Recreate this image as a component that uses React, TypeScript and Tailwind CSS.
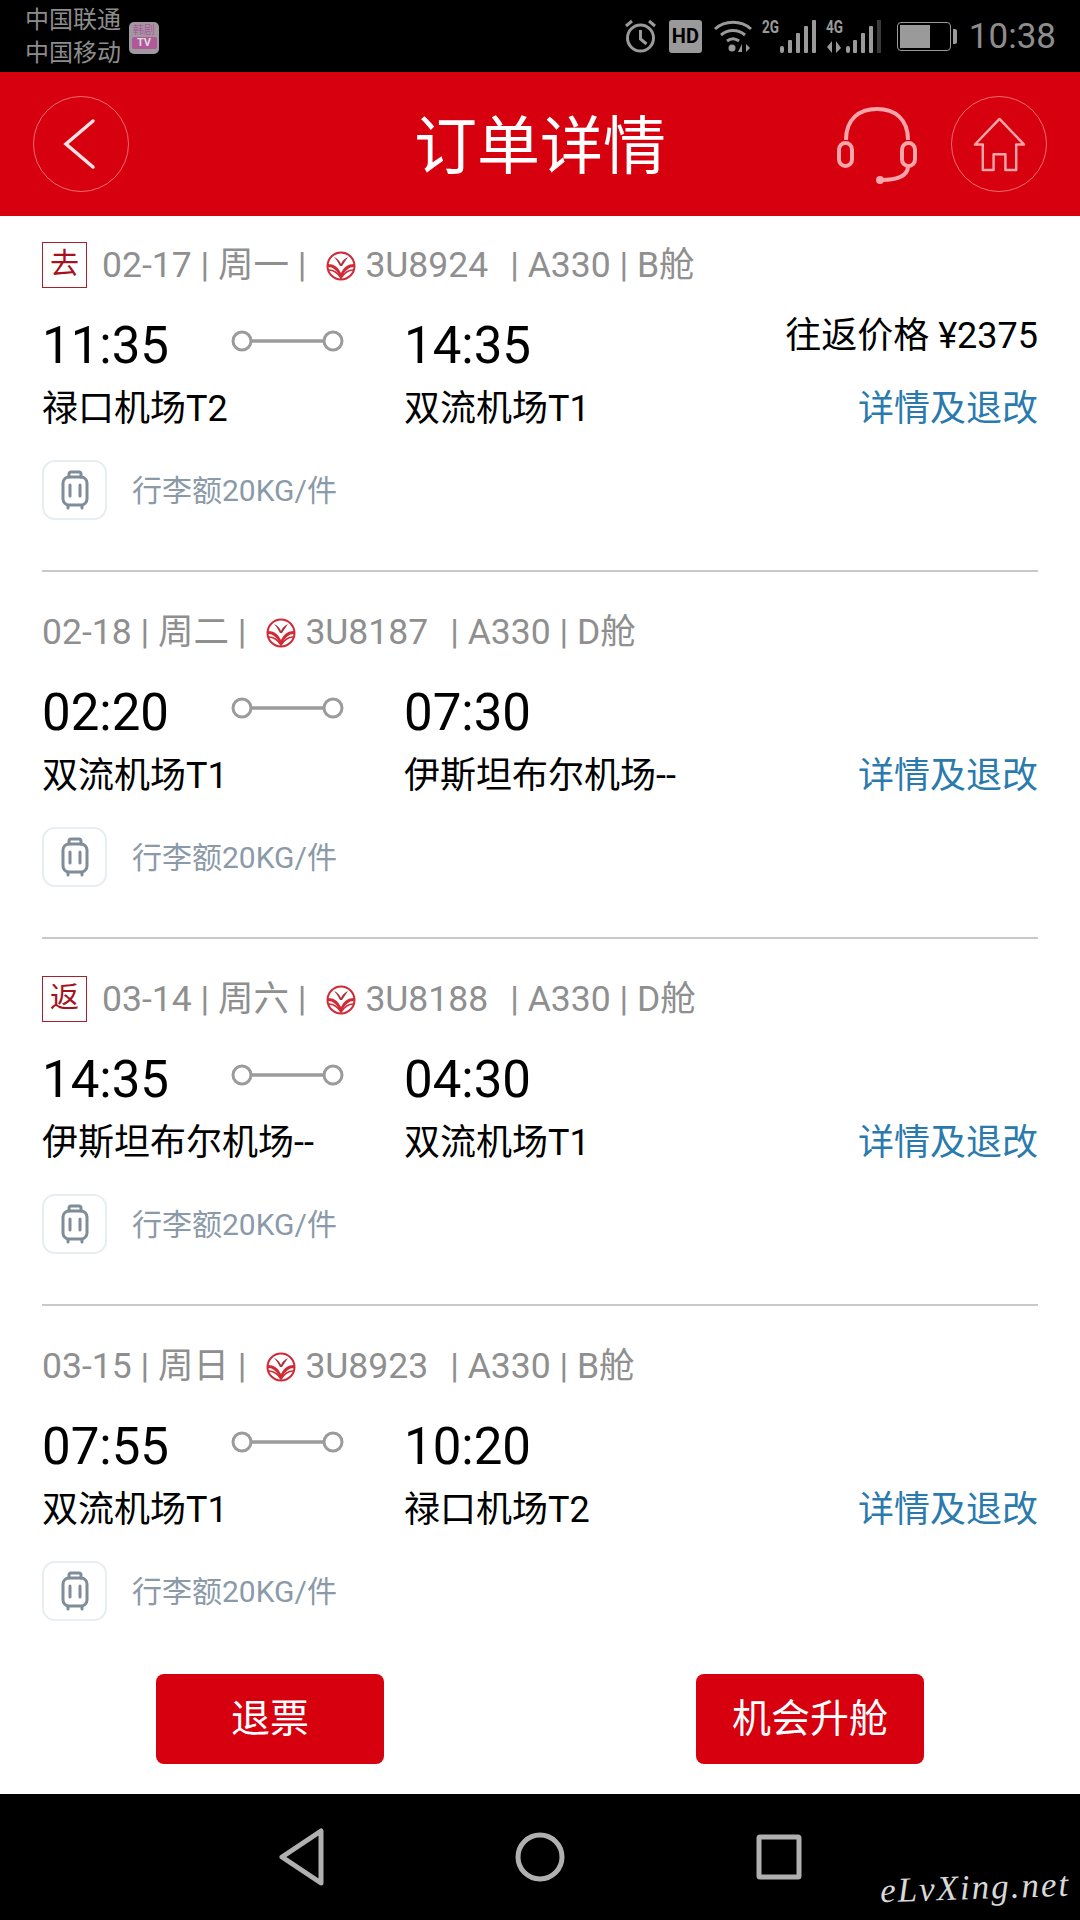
import React from 'react';

const CJK = 'font-["Roboto","Noto_Sans_CJK_SC",sans-serif]';

const segments = [
  {
    tag: '去',
    date: '02-17 | 周一 |',
    flight: '3U8924',
    cabin: '| A330 | B舱',
    from: '11:35',
    to: '14:35',
    fromPort: '禄口机场T2',
    toPort: '双流机场T1',
    price: '往返价格 ¥2375',
  },
  {
    date: '02-18 | 周二 |',
    flight: '3U8187',
    cabin: '| A330 | D舱',
    from: '02:20',
    to: '07:30',
    fromPort: '双流机场T1',
    toPort: '伊斯坦布尔机场--',
  },
  {
    tag: '返',
    date: '03-14 | 周六 |',
    flight: '3U8188',
    cabin: '| A330 | D舱',
    from: '14:35',
    to: '04:30',
    fromPort: '伊斯坦布尔机场--',
    toPort: '双流机场T1',
  },
  {
    date: '03-15 | 周日 |',
    flight: '3U8923',
    cabin: '| A330 | B舱',
    from: '07:55',
    to: '10:20',
    fromPort: '双流机场T1',
    toPort: '禄口机场T2',
  },
];

const AirlineLogo = () => (
  <svg width="30" height="30" viewBox="0 0 30 30" fill="none">
    <circle cx="15" cy="15" r="13.5" fill="#fff" stroke="#d02a36" strokeWidth="2" />
    <path d="M2 13c6 0 10 3 13 9 3-6 7-9 13-9v3c-5 0-9 3-13 12-4-9-8-12-13-12z" fill="#d02a36" />
    <path d="M3 19c5 0 8 2 12 8 4-6 7-8 12-8" stroke="#d02a36" strokeWidth="1.6" />
    <path d="M8 6c3 1 5 3 7 7 1-3 3-5 7-7-2 3-4 6-6 9h-2C12 11 10 8 8 6z" fill="#a8323a" />
  </svg>
);

const Connector = () => (
  <svg className="-ml-[1px]" width="114" height="24" viewBox="0 0 114 24" fill="none" stroke="#9b9b9b">
    <line x1="20" y1="12" x2="94" y2="12" strokeWidth="3.5" />
    <circle cx="11" cy="12" r="9" strokeWidth="3" fill="#fff" />
    <circle cx="102" cy="12" r="9" strokeWidth="3" fill="#fff" />
  </svg>
);

const Bag = () => (
  <div className="flex h-[60px] w-[65px] items-center justify-center rounded-[13px] border-[2px] border-[#e8edf1]">
    <svg width="28" height="40" viewBox="0 0 28 40" fill="none" stroke="#7f8c99" strokeWidth="3" strokeLinecap="round">
      <rect x="2" y="7" width="24" height="28" rx="6" />
      <path d="M8 7V4a2 2 0 0 1 2-2h8a2 2 0 0 1 2 2v3" />
      <path d="M9 15v11M19 15v11M7 36v2M21 36v2" />
    </svg>
  </div>
);

const Segment = ({ s, index }: { s: (typeof segments)[number]; index: number }) => {
  const first = index === 0;
  const last = index === segments.length - 1;
  return (
    <div className={`mx-[42px] flex flex-col ${first ? 'h-[356px]' : 'h-[367px]'} ${last ? '' : 'border-b-2 border-[#c9c9c9]'}`}>
      <div className={`flex h-[46px] items-center text-[35.5px] text-[#8f8f8f] ${first ? 'mt-[27px]' : 'mt-[38px]'}`}>
        {s.tag && (
          <span className="mr-[15px] flex h-[46px] w-[45px] -translate-y-[1px] items-center justify-center border border-[#a8202c] text-[29px] text-[#a8101c]">
            {s.tag}
          </span>
        )}
        <span>{s.date}</span>
        <span className="ml-[20px] mr-[9px] flex">
          <AirlineLogo />
        </span>
        <span>{s.flight}</span>
        <span className="ml-[22px]">{s.cabin}</span>
      </div>
      <div className="mt-[27px] flex">
        <div className="w-[190px]">
          <div className="h-[60px] text-[51px] leading-[60px] text-black">{s.from}</div>
        </div>
        <div className="w-[172px] pt-[13px]">
          <Connector />
        </div>
        <div className="h-[60px] text-[51px] leading-[60px] text-black">{s.to}</div>
        {s.price && <div className="ml-auto text-[36px] leading-[40px] text-black">{s.price}</div>}
      </div>
      <div className="mt-[9px] flex h-[48px] items-center text-[36px] text-black">
        <span className="w-[362px] whitespace-nowrap">{s.fromPort}</span>
        <span className="whitespace-nowrap">{s.toPort}</span>
        <span className="ml-auto text-[#2a7aad]">详情及退改</span>
      </div>
      <div className="mt-[27px] flex items-center">
        <Bag />
        <span className="ml-[25px] text-[30px] text-[#8a9aa8]">行李额20KG/件</span>
      </div>
    </div>
  );
};

const App = () => {
  return (
    <div className={`flex h-[1920px] w-[1080px] flex-col overflow-hidden bg-white ${CJK}`}>
      <div className="flex h-[72px] items-center justify-between bg-black pl-[25px] pr-[24px] text-[#8d8d8d]">
        <div className="flex items-center">
          <div className="pt-[2px] text-[24px] leading-[33px]">
            <div>中国联通</div>
            <div>中国移动</div>
          </div>
          <div className="ml-[8px] mt-[3px] flex h-[32px] w-[30px] flex-col items-center rounded-[5px] bg-[#a09aa0] pt-[2px] text-[11px] leading-[13px] text-[#b0589a]">
            <span>韩剧</span>
            <span className="w-[25px] rounded-[2px] bg-[#b0589a] text-center text-[11px] font-bold leading-[12px] text-[#ddd]">TV</span>
          </div>
        </div>
        <div className="flex items-center">
          <svg width="35" height="36" viewBox="0 0 35 36" fill="none" stroke="#9a9a9a" strokeWidth="3">
            <circle cx="17.5" cy="20" r="13" />
            <path d="M17.5 12v9l6 5M3 8l6-5M32 8l-6-5" />
          </svg>
          <span className="ml-[11px] flex h-[33px] w-[33px] items-center justify-center rounded-[3px] bg-[#9a9a9a] text-[20px] font-bold text-black">HD</span>
          <svg className="ml-[11px]" width="40" height="34" viewBox="0 0 40 34" fill="none" stroke="#9a9a9a" strokeWidth="3">
            <path d="M2 10c10-9 26-9 36 0M8 16c7-6 17-6 24 0M14 22c4-3 8-3 12 0" />
            <circle cx="19" cy="29" r="3.5" fill="#9a9a9a" stroke="none" />
            <path d="M29 33v-8l-4 8zM33 33v-8l4 4z" fill="#9a9a9a" stroke="none" />
          </svg>
          <svg className="ml-[9px] overflow-visible" width="55" height="34" viewBox="0 0 55 34" fill="#9a9a9a">
            <text x="0" y="14" fontSize="18" fontWeight="700" textLength="17" lengthAdjust="spacingAndGlyphs">2G</text>
            <rect x="18" y="27" width="4" height="7" rx="2" />
            <rect x="26" y="21" width="4" height="13" rx="1" />
            <rect x="34" y="14" width="4" height="20" rx="1" />
            <rect x="42" y="7" width="4" height="27" rx="1" />
            <rect x="50" y="1" width="4" height="33" rx="1" />
          </svg>
          <svg className="ml-[9px] overflow-visible" width="55" height="34" viewBox="0 0 55 34" fill="#9a9a9a">
            <text x="0" y="14" fontSize="18" fontWeight="700" textLength="17" lengthAdjust="spacingAndGlyphs">4G</text>
            <path d="M6 34V22l-5 6zM10 34V22l5 7z" />
            <rect x="20" y="27" width="4" height="7" rx="2" />
            <rect x="27" y="21" width="4" height="13" rx="1" />
            <rect x="35" y="14" width="4" height="20" rx="1" />
            <rect x="43" y="7" width="4" height="27" rx="1" />
            <rect x="51" y="1" width="4" height="33" fill="#3a3a3a" />
          </svg>
          <div className="ml-[16px] flex h-[29px] w-[54px] items-center rounded-[4px] border border-[#9a9a9a] p-[2px]">
            <div className="h-full w-[30px] bg-[#9a9a9a]" />
          </div>
          <div className="ml-[2px] h-[15px] w-[4px] rounded-r-[2px] bg-[#9a9a9a]" />
          <span className="ml-[12px] text-[35px] leading-none">10:38</span>
        </div>
      </div>

      <div className="flex h-[144px] items-center bg-[#d6000f] px-[33px]">
        <div className="w-[210px]">
          <div className="flex h-[96px] w-[96px] items-center justify-center rounded-full border border-[#f36b72]">
            <svg className="-ml-[5px]" width="34" height="52" viewBox="0 0 34 52" fill="none" stroke="#fbe3e4" strokeWidth="3.5" strokeLinecap="round">
              <path d="M31 3 4 26l27 23" />
            </svg>
          </div>
        </div>
        <div className="flex-1 pt-[6px] text-center text-[63px] text-white">订单详情</div>
        <div className="flex w-[210px] items-center">
          <svg className="mr-[34px] mt-[3px]" width="80" height="78" viewBox="0 0 80 78" fill="none" stroke="#f9a5a9" strokeWidth="4">
            <path d="M9 33C9 12 22 2 40 2s31 10 31 31" />
            <rect x="2" y="36" width="13" height="23" rx="6.5" />
            <rect x="65" y="36" width="13" height="23" rx="6.5" />
            <path d="M71 59c0 9-9 14-27 14" />
            <circle cx="43" cy="73" r="4" fill="#f9a5a9" stroke="none" />
          </svg>
          <div className="flex h-[96px] w-[96px] items-center justify-center rounded-full border border-[#f36b72]">
            <svg width="57" height="55" viewBox="0 0 54 56" fill="none" stroke="#f9a5a9" strokeWidth="2.5" strokeLinejoin="round">
              <path d="M27 2 2 28h8v26h11V38h12v16h11V28h8z" />
            </svg>
          </div>
        </div>
      </div>

      <div className="flex-1">
        {segments.map((s, i) => (
          <Segment key={s.flight} s={s} index={i} />
        ))}
      </div>

      <div className="flex h-[120px] justify-between px-[156px]">
        <button className="h-[90px] w-[228px] rounded-[8px] bg-[#d6000f] text-[39px] text-white">退票</button>
        <button className="h-[90px] w-[228px] rounded-[8px] bg-[#d6000f] text-[39px] text-white">机会升舱</button>
      </div>

      <div className="relative flex h-[126px] items-center justify-center gap-[191px] bg-black">
        <svg width="46" height="58" viewBox="0 0 46 58" fill="none" stroke="#b0b0b0" strokeWidth="5" strokeLinejoin="round">
          <path d="M43 3v52L4 29z" />
        </svg>
        <svg width="50" height="50" viewBox="0 0 50 50" fill="none" stroke="#b0b0b0" strokeWidth="5">
          <circle cx="25" cy="25" r="22" />
        </svg>
        <svg width="46" height="46" viewBox="0 0 46 46" fill="none" stroke="#b0b0b0" strokeWidth="5" strokeLinejoin="round">
          <rect x="3" y="3" width="40" height="40" rx="1" />
        </svg>
        <span className="absolute right-[10px] top-[68px] -rotate-2 font-['Liberation_Serif',serif] text-[35px] italic tracking-[2px] text-[#d8d8d8]">eLvXing.net</span>
      </div>
    </div>
  );
};

export default App;
